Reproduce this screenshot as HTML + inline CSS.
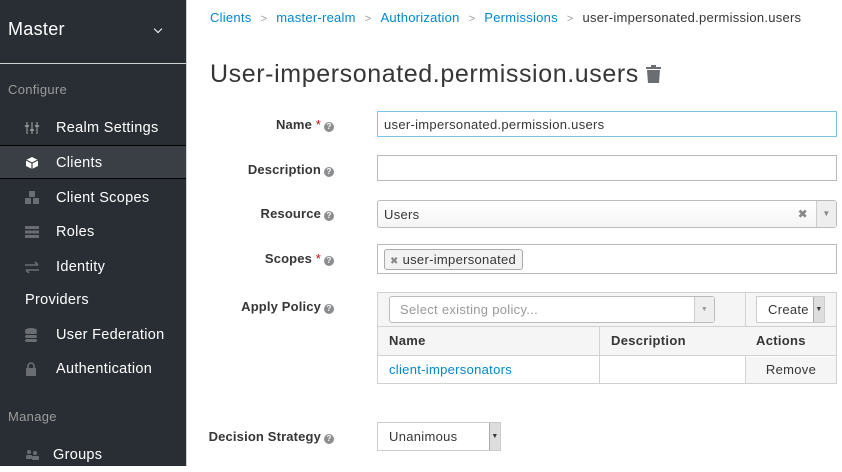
<!DOCTYPE html>
<html><head><meta charset="utf-8"><style>
*{box-sizing:border-box;margin:0;padding:0}
body{width:842px;height:466px;overflow:hidden;font-family:"Liberation Sans",sans-serif;font-size:13px;color:#363636;background:#fff;position:relative;letter-spacing:0.3px}
#side{position:absolute;left:0;top:0;width:186px;height:466px;background:#292e34;color:#fff}
#side .realm{height:64px;border-bottom:1px solid #d1d1d1;padding:19px 8px;font-size:18px;color:#fff}
#side .realm span{position:absolute;left:155px;top:26px;width:6px;height:6px;border-right:1.5px solid #fff;border-bottom:1.5px solid #fff;transform:rotate(45deg)}
.sec{color:#9c9c9c;font-size:13px;position:absolute;left:8px}
.it{position:absolute;left:0;width:186px;height:34px;line-height:34px;font-size:14.5px;color:#fff}
.it .ic{position:absolute;left:25px;top:11px;width:14px;height:12px}
.it .t{position:absolute;left:56px}
.act{background:#393f44;border-top:1px solid #030303;border-bottom:1px solid #030303}
#main{position:absolute;left:186px;top:0;right:0;height:466px;border-left:1px solid #d1d1d1}
.bc{position:absolute;top:10px;left:23px;font-size:13px;color:#363636;white-space:nowrap;letter-spacing:0.25px}
.bc a{color:#0088ce;text-decoration:none}
.bc i{font-style:normal;color:#9c9c9c;margin:0 9px;font-size:11px}
h1{position:absolute;left:23px;top:60px;font-size:25px;font-weight:normal;color:#363636;letter-spacing:0.6px}
.lbl{position:absolute;right:508px;font-weight:bold;font-size:13px;color:#363636;white-space:nowrap;letter-spacing:0.15px}
.lbl b{color:#c00;font-weight:normal}
.q{display:inline-block;width:10px;height:10px;border-radius:50%;background:#8b8d8f;color:#fff;font-size:8px;line-height:10px;text-align:center;vertical-align:0;margin-left:3px;letter-spacing:0}
.inp{position:absolute;left:377px;width:460px;height:26px;border:1px solid #bbb;background:#fff;padding:5px 6px;font-size:13px}
</style></head><body>
<div id="side">
<div class="realm">Master<span></span></div>
<div class="sec" style="top:82px">Configure</div>
<div class="it" style="top:111px"><svg class="ic" viewBox="0 0 14 12"><g stroke="#8b8d8f" stroke-width="1.3"><path d="M2 0v12M7 0v12M12 0v12"/></g><g fill="#8b8d8f"><rect x="0" y="3" width="4" height="2"/><rect x="5" y="7" width="4" height="2"/><rect x="10" y="3" width="4" height="2"/></g></svg><span class="t">Realm Settings</span></div>
<div class="it act" style="top:145px"><svg class="ic" viewBox="0 0 14 14" style="height:14px;top:10px"><path d="M7 1L13 4V10L7 13L1 10V4Z" fill="#fff"/><path d="M1 4L7 7L13 4M7 7V13" stroke="#393f44" stroke-width="1.2" fill="none"/></svg><span class="t">Clients</span></div>
<div class="it" style="top:181px"><svg class="ic" viewBox="0 0 14 14" style="height:14px;top:10px" fill="#6a6e73"><rect x="4" y="0" width="6" height="6"/><rect x="0" y="7" width="6" height="6"/><rect x="8" y="7" width="6" height="6"/></svg><span class="t">Client Scopes</span></div>
<div class="it" style="top:215px"><svg class="ic" viewBox="0 0 14 12" fill="#6a6e73"><rect y="0" width="14" height="3"/><rect y="4.5" width="14" height="3"/><rect y="9" width="14" height="3"/></svg><span class="t">Roles</span></div>
<div class="it" style="top:250px"><svg class="ic" viewBox="0 0 14 12" stroke="#6a6e73" stroke-width="1.6" fill="none"><path d="M0 4h13M10 1l3 3M14 9H1M4 12L1 9"/></svg><span class="t">Identity</span></div>
<div class="it" style="top:283px"><span class="t" style="left:25px">Providers</span></div>
<div class="it" style="top:318px"><svg class="ic" viewBox="0 0 12 14" style="height:14px;top:10px;width:12px" fill="#6a6e73"><ellipse cx="6" cy="2.5" rx="6" ry="2.5"/><rect y="3" width="12" height="3" rx="2"/><rect y="7" width="12" height="3" rx="2"/><rect y="11" width="12" height="3" rx="2"/></svg><span class="t">User Federation</span></div>
<div class="it" style="top:352px"><svg class="ic" viewBox="0 0 12 14" style="height:14px;top:10px;width:12px"><path d="M3 6V4a3 3 0 0 1 6 0v2" stroke="#6a6e73" stroke-width="1.6" fill="none"/><rect x="1" y="6" width="10" height="8" fill="#6a6e73"/></svg><span class="t">Authentication</span></div>
<div class="sec" style="top:409px">Manage</div>
<div class="it" style="top:438px"><svg class="ic" viewBox="0 0 14 12" fill="#6a6e73"><circle cx="4" cy="3" r="2"/><circle cx="10" cy="4" r="2"/><rect x="1" y="6" width="6" height="4" rx="1"/><rect x="7" y="7" width="7" height="4" rx="1"/></svg><span class="t" style="left:53px">Groups</span></div>
</div>
<div id="main">
<div class="bc"><a>Clients</a><i>&gt;</i><a>master-realm</a><i>&gt;</i><a>Authorization</a><i>&gt;</i><a>Permissions</a><i>&gt;</i>user-impersonated.permission.users</div>
<h1>User-impersonated.permission.users <svg width="15" height="18" viewBox="0 0 15 18" style="vertical-align:-1px"><rect x="0" y="2" width="15" height="2" fill="#6a6e73"/><rect x="5" y="0" width="5" height="2" fill="#6a6e73"/><path d="M1 5h13l-1 13H2z" fill="#6a6e73"/></svg></h1>
</div>
<div class="lbl" style="top:117px">Name <b>*</b><span class="q">?</span></div>
<div class="inp" style="top:111px;border-color:#7dc3e8">user-impersonated.permission.users</div>
<div class="lbl" style="top:162px">Description<span class="q">?</span></div>
<div class="inp" style="top:155px"></div>
<div class="lbl" style="top:206px">Resource<span class="q">?</span></div>
<div class="inp" style="top:200px;height:28px;border-radius:3px;background:linear-gradient(#fff,#f5f5f5);padding-top:6px">Users<span style="position:absolute;right:28px;top:6px;color:#888;font-size:12px">&#10006;</span><span style="position:absolute;right:0;top:0;width:20px;height:26px;border-left:1px solid #ccc;background:#eee;color:#888;font-size:8px;text-align:center;line-height:26px">&#9660;</span></div>
<div class="lbl" style="top:251px">Scopes <b>*</b><span class="q">?</span></div>
<div class="inp" style="top:244px;height:30px;padding:4px 6px"><span style="display:inline-block;border:1px solid #aaa;border-radius:3px;background:#f2f2f2;padding:2px 6px 2px 5px;font-size:13px"><span style="color:#888;font-size:10px">&#10006;</span> user-impersonated</span></div>
<div class="lbl" style="top:299px">Apply Policy<span class="q">?</span></div>
<div style="position:absolute;left:377px;top:292px;width:460px;height:92px;border:1px solid #d1d1d1">
<div style="position:absolute;left:0;top:0;width:458px;height:34px;background:#f5f5f5;border-bottom:1px solid #d1d1d1"></div>
<div style="position:absolute;left:11px;top:3px;width:326px;height:27px;border:1px solid #bbb;border-radius:3px;background:#fff;color:#999;padding:5px 10px">Select existing policy...<span style="position:absolute;right:0;top:0;width:20px;height:25px;border-left:1px solid #ccc;background:#eee;color:#999;font-size:7px;text-align:center;line-height:25px">&#9660;</span></div>
<div style="position:absolute;left:367px;top:0;width:1px;height:90px;background:#d1d1d1"></div>
<div style="position:absolute;left:378px;top:3px;width:69px;height:27px;border:1px solid #ccc;background:#fff;padding:5px 11px;overflow:hidden;white-space:nowrap">Create<span style="position:absolute;right:0;top:0;width:11px;height:26px;background:#ddd;border-left:1px solid #aaa;font-size:7px;text-align:center;line-height:26px">&#9660;</span></div>
<div style="position:absolute;left:0;top:34px;width:458px;height:29px;background:#f5f5f5;border-bottom:1px solid #d1d1d1;font-weight:bold;line-height:28px"><span style="position:absolute;left:11px">Name</span><span style="position:absolute;left:233px">Description</span><span style="position:absolute;left:378px">Actions</span></div>
<div style="position:absolute;left:221px;top:34px;width:1px;height:56px;background:#d1d1d1"></div>
<div style="position:absolute;left:11px;top:69px;color:#0088ce">client-impersonators</div>
<div style="position:absolute;left:368px;top:64px;width:90px;height:26px;background:#f5f5f5;text-align:center;line-height:26px">Remove</div>
</div>
<div class="lbl" style="top:429px">Decision Strategy<span class="q">?</span></div>
<div style="position:absolute;left:377px;top:422px;width:124px;height:29px;border:1px solid #ccc;background:#fff;padding:6px 11px">Unanimous<span style="position:absolute;right:0;top:0;width:11px;height:27px;background:#ddd;border-left:1px solid #aaa;font-size:7px;text-align:center;line-height:27px">&#9660;</span></div>
</body></html>
